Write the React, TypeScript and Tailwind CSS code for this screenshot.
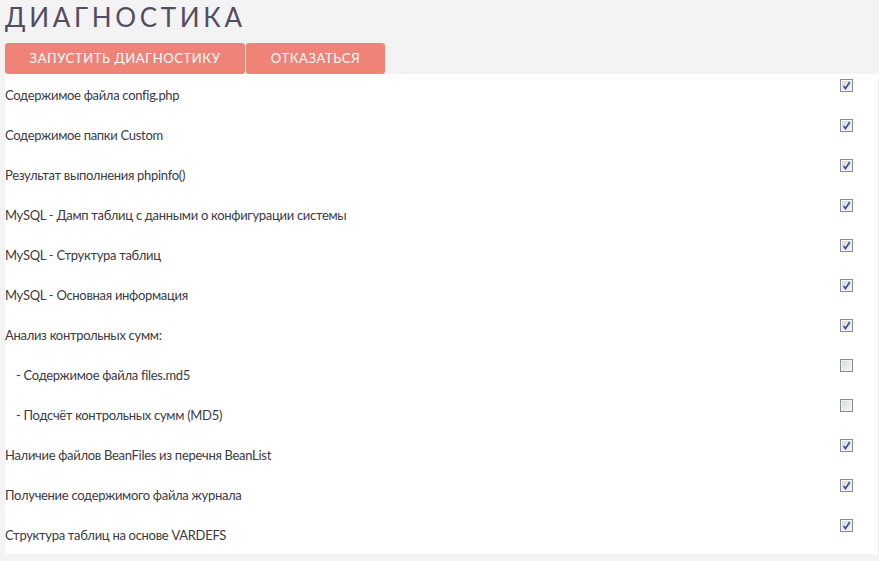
import { useState } from 'react';

type Item = { label: string; checked: boolean; sub?: boolean };

const items: Item[] = [
  { label: 'Содержимое файла config.php', checked: true },
  { label: 'Содержимое папки Custom', checked: true },
  { label: 'Результат выполнения phpinfo()', checked: true },
  { label: 'MySQL - Дамп таблиц с данными о конфигурации системы', checked: true },
  { label: 'MySQL - Структура таблиц', checked: true },
  { label: 'MySQL - Основная информация', checked: true },
  { label: 'Анализ контрольных сумм:', checked: true },
  { label: '- Содержимое файла files.md5', checked: false, sub: true },
  { label: '- Подсчёт контрольных сумм (MD5)', checked: false, sub: true },
  { label: 'Наличие файлов BeanFiles из перечня BeanList', checked: true },
  { label: 'Получение содержимого файла журнала', checked: true },
  { label: 'Структура таблиц на основе VARDEFS', checked: true },
];

function Box({ checked, onToggle }: { checked: boolean; onToggle: () => void }) {
  return (
    <button
      onClick={onToggle}
      className="w-[13px] h-[13px] border border-[#8a8a8a] bg-gradient-to-br from-[#d6d8dc] to-[#f7f8fa] flex items-center justify-center shadow-[inset_0_0_0_1px_#f4f4f4]"
    >
      {checked && (
        <svg width="9" height="9" viewBox="0 0 9 9">
          <path d="M1.5 5 L3.5 7.5 L7.8 1" stroke="#3a4fa0" strokeWidth="1.7" fill="none" />
        </svg>
      )}
    </button>
  );
}

export default function App() {
  const [state, setState] = useState(items.map(i => i.checked));

  return (
    <div className="min-h-screen bg-[#f3f3f3] font-['Lato','Liberation_Sans',sans-serif]">
      <h1 className="pl-[5px] pt-[2px] h-[43px] text-[26px] leading-[30px] tracking-[3.7px] text-[#534d64]">
        ДИАГНОСТИКА
      </h1>
      <div className="flex gap-[1px] pl-[5px]">
        <button className="w-[240px] h-[31px] rounded-[3px] bg-[#f08377] text-white text-[13px] tracking-[0.6px]">
          ЗАПУСТИТЬ ДИАГНОСТИКУ
        </button>
        <button className="w-[139px] h-[31px] rounded-[3px] bg-[#f08377] text-white text-[13px] tracking-[0.6px]">
          ОТКАЗАТЬСЯ
        </button>
      </div>
      <div className="ml-[5px] mr-[1px] bg-white">
        {items.map((it, i) => (
          <div key={i} className="h-[40px] flex justify-between pr-[25px]">
            <span
              className={`pt-[13px] text-[13px] leading-[16px] tracking-[-0.3px] text-[#3c3a44] whitespace-pre ${it.sub ? 'pl-[11px]' : ''}`}
            >
              {it.label}
            </span>
            <div className="pt-[5px]">
              <Box
                checked={state[i]}
                onToggle={() => setState(s => s.map((v, j) => (j === i ? !v : v)))}
              />
            </div>
          </div>
        ))}
      </div>
    </div>
  );
}
